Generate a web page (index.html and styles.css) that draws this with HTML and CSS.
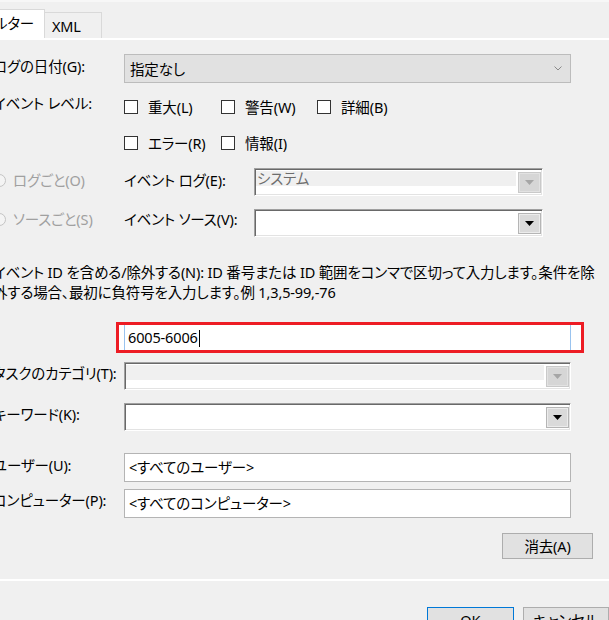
FILE: index.html
```html
<!DOCTYPE html>
<html lang="ja">
  <head>
    <meta charset="UTF-8" />
    <meta name="viewport" content="width=device-width, initial-scale=1.0" />
    <title>現在のログをフィルター</title>
    <link rel="stylesheet" href="styles.css">
  </head>
  <body>
    <div class="tabs">
      <div class="tab tab-active">フィルター</div>
      <div class="tab">XML</div>
    </div>

    <div class="panel">
      <div class="content">
        <div class="row row-date">
          <div class="label">ログの日付(G):</div>
          <div class="dropdown">
            <span>指定なし</span>
            <svg class="chevron" width="8" height="5" viewBox="0 0 8 5">
              <polyline points="0.5,0.5 4,4 7.5,0.5" fill="none" stroke="#8a8a8a" stroke-width="1" />
            </svg>
          </div>
        </div>

        <div class="row row-level">
          <div class="label">イベント レベル:</div>
          <div class="levels">
            <div class="level-line">
              <div class="check"><span class="box"></span>重大(L)</div>
              <div class="check"><span class="box"></span>警告(W)</div>
              <div class="check"><span class="box"></span>詳細(B)</div>
            </div>
            <div class="level-line level-line-2">
              <div class="check"><span class="box"></span>エラー(R)</div>
              <div class="check"><span class="box"></span>情報(I)</div>
            </div>
          </div>
        </div>

        <div class="row row-log">
          <div class="radio pad-2"><span class="dot"></span>ログごと(O)</div>
          <div class="sublabel pad-2">イベント ログ(E):</div>
          <div class="combo combo-sub combo-disabled">
            <div class="combo-edit">システム</div>
            <div class="combo-btn">
              <svg width="9" height="5" viewBox="0 0 9 5"><polygon points="0,0 9,0 4.5,5" fill="#a6a6a6" /></svg>
            </div>
          </div>
        </div>

        <div class="row row-source">
          <div class="radio"><span class="dot"></span>ソースごと(S)</div>
          <div class="sublabel">イベント ソース(V):</div>
          <div class="combo combo-sub">
            <div class="combo-edit"></div>
            <div class="combo-btn">
              <svg width="9" height="5" viewBox="0 0 9 5"><polygon points="0,0 9,0 4.5,5" fill="#000" /></svg>
            </div>
          </div>
        </div>

        <div class="description">
          イベント ID を含める/除外する(N): ID 番号または ID 範囲をコンマで区切って入力します。条件を除<br>外する場合、最初に負符号を入力します。例 1,3,5-99,-76
        </div>

        <div class="row row-id">
          <div class="label"></div>
          <div class="highlight">
            <div class="id-input">6005-6006<span class="caret"></span></div>
          </div>
        </div>

        <div class="row row-task">
          <div class="label pad-1">タスクのカテゴリ(T):</div>
          <div class="combo combo-wide combo-disabled">
            <div class="combo-edit"></div>
            <div class="combo-btn">
              <svg width="9" height="5" viewBox="0 0 9 5"><polygon points="0,0 9,0 4.5,5" fill="#a6a6a6" /></svg>
            </div>
          </div>
        </div>

        <div class="row row-keyword">
          <div class="label pad-1">キーワード(K):</div>
          <div class="combo combo-wide">
            <div class="combo-edit"></div>
            <div class="combo-btn">
              <svg width="9" height="5" viewBox="0 0 9 5"><polygon points="0,0 9,0 4.5,5" fill="#000" /></svg>
            </div>
          </div>
        </div>

        <div class="row row-user">
          <div class="label pad-2">ユーザー(U):</div>
          <div class="textbox">&lt;すべてのユーザー&gt;</div>
        </div>

        <div class="row row-computer">
          <div class="label pad-1">コンピューター(P):</div>
          <div class="textbox">&lt;すべてのコンピューター&gt;</div>
        </div>

        <div class="actions">
          <button class="btn btn-clear">消去(A)</button>
        </div>
      </div>
    </div>

    <div class="footer">
      <button class="btn btn-default">OK</button>
      <button class="btn">キャンセル</button>
    </div>
  </body>
</html>
```

FILE: styles.css
```css
html,
body {
  overflow: hidden;
}
body {
  margin: 0;
  background: #f0f0f0;
  color: #000;
  font-family: "Noto Sans", "Noto Sans CJK JP", sans-serif;
  font-size: 14.5px;
  line-height: 20px;
  letter-spacing: -0.15px;
  font-feature-settings: "palt";
}
.tabs {
  display: flex;
  align-items: flex-end;
  height: 38px;
  margin-left: -40px;
  background: linear-gradient(#f7f7f7 0 2px, #f0f0f0 2px);
}
.tab {
  box-sizing: border-box;
  width: 57px;
  height: 26px;
  padding: 3px 0 0 7px;
  border: 1px solid #d9d9d9;
  border-left: none;
  border-bottom: none;
}
.tab-active {
  width: 85px;
  height: 29px;
  padding: 3px 10px 0 0;
  text-align: right;
  background: #fff;
  border-left: 1px solid #d9d9d9;
}
.panel {
  height: 539px;
  border-top: 2px solid #fff;
  border-bottom: 2px solid #fff;
}
.content {
  margin-left: -7px;
}
.row {
  display: flex;
  align-items: flex-start;
}
.label {
  width: 131px;
  flex-shrink: 0;
}
.pad-1 {
  padding-top: 1px;
}
.pad-2 {
  padding-top: 2px;
}
.row-date {
  margin-top: 14px;
}
.row-date .label {
  padding-top: 2px;
}
.dropdown {
  box-sizing: border-box;
  width: 447px;
  height: 29px;
  display: flex;
  align-items: center;
  justify-content: space-between;
  padding: 0 8px 0 5px;
  background: #e1e1e1;
  border: 1px solid #bcbcbc;
}
.row-level {
  margin-top: 10px;
}
.levels {
  padding-top: 4px;
}
.level-line {
  display: grid;
  grid-template-columns: 97px 96px auto;
}
.level-line-2 {
  margin-top: 16px;
}
.check {
  display: flex;
  align-items: center;
}
.box {
  box-sizing: border-box;
  width: 14px;
  height: 14px;
  margin-right: 10px;
  background: #fff;
  border: 1px solid #333;
}
.row-log {
  margin-top: 15px;
}
.row-source {
  margin-top: 13px;
}
.radio {
  width: 131px;
  flex-shrink: 0;
  display: flex;
  align-items: center;
  color: #a0a0a0;
}
.dot {
  box-sizing: border-box;
  width: 13px;
  height: 13px;
  margin-right: 7px;
  border: 1px solid #c4c4c4;
  border-radius: 50%;
  background: #f4f4f4;
}
.sublabel {
  width: 130px;
  flex-shrink: 0;
}
.combo {
  box-sizing: border-box;
  height: 28px;
  display: flex;
  align-items: flex-start;
  padding: 1px;
  background: #fff;
  border: 1px solid;
  border-color: #a0a0a0 #fff #fff #a0a0a0;
  box-shadow: inset 1px 1px 0 #696969, inset -1px -1px 0 #e3e3e3;
}
.combo-sub {
  width: 289px;
}
.combo-wide {
  width: 447px;
}
.combo-edit {
  flex: 1;
  height: 15px;
  margin: 1px 2px 0 0;
  padding-left: 1px;
  line-height: 15px;
  color: #6d6d6d;
}
.combo-disabled .combo-edit {
  background: #f0f0f0;
}
.combo-btn {
  box-sizing: border-box;
  width: 23px;
  height: 21px;
  margin-top: 2px;
  display: flex;
  align-items: center;
  justify-content: center;
  background: #dadada;
  border: 1px solid #b5b5b5;
  box-shadow: inset 0 0 0 1px #ececec;
}
.combo-disabled .combo-btn {
  background: #d6d6d6;
  border-color: #c9c9c9;
  box-shadow: inset 0 0 0 1px #e2e2e2;
}
.description {
  margin-top: 25px;
  white-space: nowrap;
}
.row-id {
  margin-top: 20px;
}
.highlight {
  margin-left: -8px;
  padding: 0 10px 0 5px;
  background: #fff;
  border: 3px solid #ed1c24;
}
.id-input {
  box-sizing: border-box;
  width: 447px;
  height: 25px;
  padding-left: 3px;
  line-height: 25px;
  border-left: 1px solid #99c3ef;
  border-right: 1px solid #99c3ef;
}
.caret {
  display: inline-block;
  width: 1px;
  height: 17px;
  margin-left: 1px;
  vertical-align: -4px;
  background: #000;
}
.row-task {
  margin-top: 9px;
}
.row-keyword {
  margin-top: 13px;
}
.row-user {
  margin-top: 22px;
}
.row-computer {
  margin-top: 7px;
}
.textbox {
  box-sizing: border-box;
  width: 447px;
  height: 29px;
  padding-left: 4px;
  line-height: 27px;
  background: #fff;
  border: 1px solid #b4b4b4;
}
.actions {
  width: 600px;
  margin-top: 15px;
  display: flex;
  justify-content: flex-end;
}
.btn {
  box-sizing: border-box;
  width: 92px;
  height: 26px;
  padding: 0;
  font: inherit;
  line-height: 24px;
  letter-spacing: inherit;
  color: #000;
  text-align: center;
  background: #e1e1e1;
  border: 1px solid #adadad;
}
.btn-clear {
  width: 91px;
}
.btn-default {
  border-color: #0078d7;
}
.footer {
  display: flex;
  gap: 9px;
  margin-top: 26px;
  padding-left: 427px;
}
```
